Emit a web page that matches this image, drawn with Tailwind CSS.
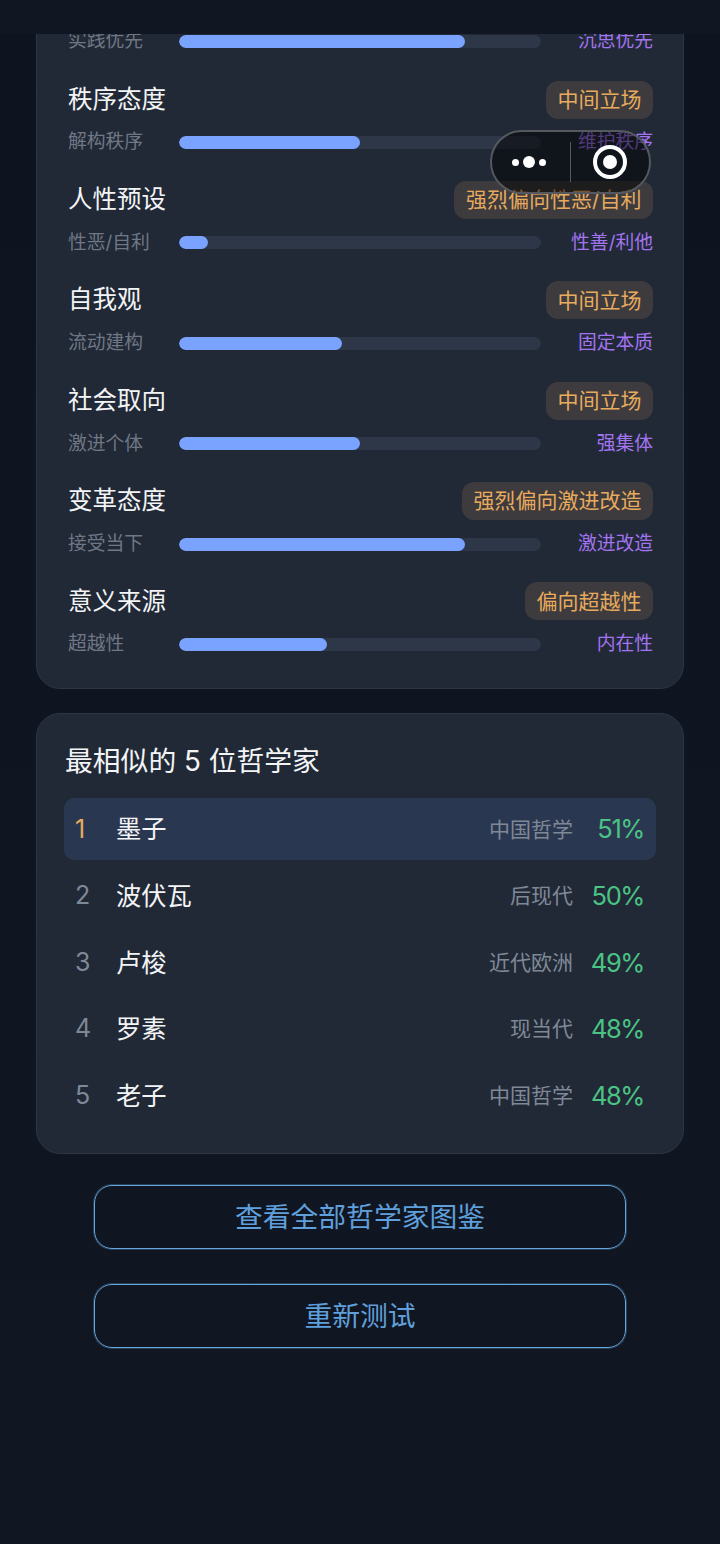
<!DOCTYPE html>
<html lang="zh-CN">
<head>
  <meta charset="UTF-8">
  <meta name="viewport" content="width=device-width, initial-scale=1.0">
  <title>哲学测试结果</title>
  <script src="https://cdn.jsdelivr.net/npm/@tailwindcss/browser@4"></script>
</head>
<body class="bg-[#111722] font-['Inter','Noto_Sans_CJK_SC',sans-serif]">
  <div class="relative w-[720px] h-[1544px] overflow-hidden bg-linear-to-b from-[#0d131f] to-[#111722]">

    <!-- Nav bar -->
    <div class="relative z-20 h-[34px] bg-[#101622]"></div>

    <!-- Capsule -->
    <div class="absolute z-30 left-[489.5px] top-[130px] w-[161px] h-[64px] rounded-full border-2 border-[#55595f] bg-black/50 flex items-center">
      <div class="w-[78px] pr-[4px] flex items-center justify-center gap-[4px]">
        <span class="w-[7px] h-[7px] rounded-full bg-white"></span>
        <span class="w-[12px] h-[12px] rounded-full bg-white"></span>
        <span class="w-[7px] h-[7px] rounded-full bg-white"></span>
      </div>
      <div class="w-px h-[40px] bg-[#55595f]"></div>
      <div class="flex-1 flex items-center justify-center pl-[1px]">
        <div class="w-[34px] h-[34px] rounded-full border-[4px] border-white flex items-center justify-center">
          <span class="w-[14px] h-[14px] rounded-full bg-white"></span>
        </div>
      </div>
    </div>

    <div class="px-[36px]">
      <!-- Dimensions card -->
      <div class="-mt-[30px] pt-[23px] pb-[31px] pl-[31px] pr-[30px] rounded-[24px] border border-[#2d3644] bg-[#212936]">
        <div class="flex items-center h-[26px] mb-[26.5px]">
          <span class="w-[111px] text-[18.8px] text-[#6f7785] whitespace-nowrap">实践优先</span>
          <div class="w-[362px] h-[13px] rounded-full bg-[#2d3748] overflow-hidden"><div class="h-full rounded-full bg-[#7aa2ff] w-[79%]"></div></div>
          <span class="flex-1 text-right text-[18.8px] text-[#a374f0] whitespace-nowrap">沉思优先</span>
        </div>

        <div class="flex flex-col gap-[25.4px]">
          <div>
            <div class="flex items-center justify-between h-[38px] mb-[11px]">
              <span class="pb-[1px] text-[24.5px] text-[#f3f4f6]">秩序态度</span>
              <span class="h-[38px] px-[11.5px] flex items-center rounded-[12px] bg-[#3d3b3d] text-[21px] text-[#e8ab5e] whitespace-nowrap">中间立场</span>
            </div>
            <div class="flex items-center h-[26px]">
              <span class="w-[111px] text-[18.8px] text-[#6f7785] whitespace-nowrap">解构秩序</span>
              <div class="w-[362px] h-[13px] rounded-full bg-[#2d3748] overflow-hidden"><div class="h-full rounded-full bg-[#7aa2ff] w-[50%]"></div></div>
              <span class="flex-1 text-right text-[18.8px] text-[#a374f0] whitespace-nowrap">维护秩序</span>
            </div>
          </div>

          <div>
            <div class="flex items-center justify-between h-[38px] mb-[11px]">
              <span class="pb-[1px] text-[24.5px] text-[#f3f4f6]">人性预设</span>
              <span class="h-[38px] px-[11.5px] flex items-center rounded-[12px] bg-[#3d3b3d] text-[21px] text-[#e8ab5e] whitespace-nowrap">强烈偏向性恶/自利</span>
            </div>
            <div class="flex items-center h-[26px]">
              <span class="w-[111px] text-[18.8px] text-[#6f7785] whitespace-nowrap">性恶/自利</span>
              <div class="w-[362px] h-[13px] rounded-full bg-[#2d3748] overflow-hidden"><div class="h-full rounded-full bg-[#7aa2ff] w-[8%]"></div></div>
              <span class="flex-1 text-right text-[18.8px] text-[#a374f0] whitespace-nowrap">性善/利他</span>
            </div>
          </div>

          <div>
            <div class="flex items-center justify-between h-[38px] mb-[11px]">
              <span class="pb-[1px] text-[24.5px] text-[#f3f4f6]">自我观</span>
              <span class="h-[38px] px-[11.5px] flex items-center rounded-[12px] bg-[#3d3b3d] text-[21px] text-[#e8ab5e] whitespace-nowrap">中间立场</span>
            </div>
            <div class="flex items-center h-[26px]">
              <span class="w-[111px] text-[18.8px] text-[#6f7785] whitespace-nowrap">流动建构</span>
              <div class="w-[362px] h-[13px] rounded-full bg-[#2d3748] overflow-hidden"><div class="h-full rounded-full bg-[#7aa2ff] w-[45%]"></div></div>
              <span class="flex-1 text-right text-[18.8px] text-[#a374f0] whitespace-nowrap">固定本质</span>
            </div>
          </div>

          <div>
            <div class="flex items-center justify-between h-[38px] mb-[11px]">
              <span class="pb-[1px] text-[24.5px] text-[#f3f4f6]">社会取向</span>
              <span class="h-[38px] px-[11.5px] flex items-center rounded-[12px] bg-[#3d3b3d] text-[21px] text-[#e8ab5e] whitespace-nowrap">中间立场</span>
            </div>
            <div class="flex items-center h-[26px]">
              <span class="w-[111px] text-[18.8px] text-[#6f7785] whitespace-nowrap">激进个体</span>
              <div class="w-[362px] h-[13px] rounded-full bg-[#2d3748] overflow-hidden"><div class="h-full rounded-full bg-[#7aa2ff] w-[50%]"></div></div>
              <span class="flex-1 text-right text-[18.8px] text-[#a374f0] whitespace-nowrap">强集体</span>
            </div>
          </div>

          <div>
            <div class="flex items-center justify-between h-[38px] mb-[11px]">
              <span class="pb-[1px] text-[24.5px] text-[#f3f4f6]">变革态度</span>
              <span class="h-[38px] px-[11.5px] flex items-center rounded-[12px] bg-[#3d3b3d] text-[21px] text-[#e8ab5e] whitespace-nowrap">强烈偏向激进改造</span>
            </div>
            <div class="flex items-center h-[26px]">
              <span class="w-[111px] text-[18.8px] text-[#6f7785] whitespace-nowrap">接受当下</span>
              <div class="w-[362px] h-[13px] rounded-full bg-[#2d3748] overflow-hidden"><div class="h-full rounded-full bg-[#7aa2ff] w-[79%]"></div></div>
              <span class="flex-1 text-right text-[18.8px] text-[#a374f0] whitespace-nowrap">激进改造</span>
            </div>
          </div>

          <div>
            <div class="flex items-center justify-between h-[38px] mb-[11px]">
              <span class="pb-[1px] text-[24.5px] text-[#f3f4f6]">意义来源</span>
              <span class="h-[38px] px-[11.5px] flex items-center rounded-[12px] bg-[#3d3b3d] text-[21px] text-[#e8ab5e] whitespace-nowrap">偏向超越性</span>
            </div>
            <div class="flex items-center h-[26px]">
              <span class="w-[111px] text-[18.8px] text-[#6f7785] whitespace-nowrap">超越性</span>
              <div class="w-[362px] h-[13px] rounded-full bg-[#2d3748] overflow-hidden"><div class="h-full rounded-full bg-[#7aa2ff] w-[41%]"></div></div>
              <span class="flex-1 text-right text-[18.8px] text-[#a374f0] whitespace-nowrap">内在性</span>
            </div>
          </div>
        </div>
      </div>

      <!-- Similar philosophers -->
      <div class="mt-[24px] h-[441px] pt-[27px] px-[27px] rounded-[24px] border border-[#2d3644] bg-[#212936]">
        <h2 class="h-[40px] leading-[40px] text-[27.8px] text-[#f3f4f6] whitespace-nowrap px-[1px]">最相似的 5 位哲学家</h2>
        <div class="mt-[17px] flex flex-col">
          <div class="h-[62px] mb-[4.6px] flex items-center pl-[11px] pr-[12px] rounded-[10px] bg-[#2a3750]">
            <span class="w-[41px] text-[25px] text-[#e8ab5e]">1</span>
            <span class="flex-1 text-[25.3px] text-[#f3f4f6]">墨子</span>
            <span class="text-[21px] text-[#7f8896]">中国哲学</span>
            <span class="w-[71px] text-right text-[25.5px] tracking-[-1.4px] text-[#4ac384]">51%</span>
          </div>
          <div class="h-[62px] mb-[4.6px] flex items-center pl-[11px] pr-[12px]">
            <span class="w-[41px] text-[25px] text-[#7f8896]">2</span>
            <span class="flex-1 text-[25.3px] text-[#f3f4f6]">波伏瓦</span>
            <span class="text-[21px] text-[#7f8896]">后现代</span>
            <span class="w-[71px] text-right text-[25.5px] tracking-[-1.4px] text-[#4ac384]">50%</span>
          </div>
          <div class="h-[62px] mb-[4.6px] flex items-center pl-[11px] pr-[12px]">
            <span class="w-[41px] text-[25px] text-[#7f8896]">3</span>
            <span class="flex-1 text-[25.3px] text-[#f3f4f6]">卢梭</span>
            <span class="text-[21px] text-[#7f8896]">近代欧洲</span>
            <span class="w-[71px] text-right text-[25.5px] tracking-[-1.4px] text-[#4ac384]">49%</span>
          </div>
          <div class="h-[62px] mb-[4.6px] flex items-center pl-[11px] pr-[12px]">
            <span class="w-[41px] text-[25px] text-[#7f8896]">4</span>
            <span class="flex-1 text-[25.3px] text-[#f3f4f6]">罗素</span>
            <span class="text-[21px] text-[#7f8896]">现当代</span>
            <span class="w-[71px] text-right text-[25.5px] tracking-[-1.4px] text-[#4ac384]">48%</span>
          </div>
          <div class="h-[62px] flex items-center pl-[11px] pr-[12px]">
            <span class="w-[41px] text-[25px] text-[#7f8896]">5</span>
            <span class="flex-1 text-[25.3px] text-[#f3f4f6]">老子</span>
            <span class="text-[21px] text-[#7f8896]">中国哲学</span>
            <span class="w-[71px] text-right text-[25.5px] tracking-[-1.4px] text-[#4ac384]">48%</span>
          </div>
        </div>
      </div>

      <!-- Actions -->
      <div class="mt-[31px] flex flex-col items-center gap-[35px]">
        <button class="w-[532px] h-[64px] rounded-[18px] border border-[#66a6de] shadow-[0_0_0_1px_rgba(90,154,210,0.3)] text-[27.8px] text-[#5f9fdc]">查看全部哲学家图鉴</button>
        <button class="w-[532px] h-[64px] rounded-[18px] border border-[#66a6de] shadow-[0_0_0_1px_rgba(90,154,210,0.3)] text-[27.8px] text-[#5f9fdc]">重新测试</button>
      </div>
    </div>
  </div>
</body>
</html>
